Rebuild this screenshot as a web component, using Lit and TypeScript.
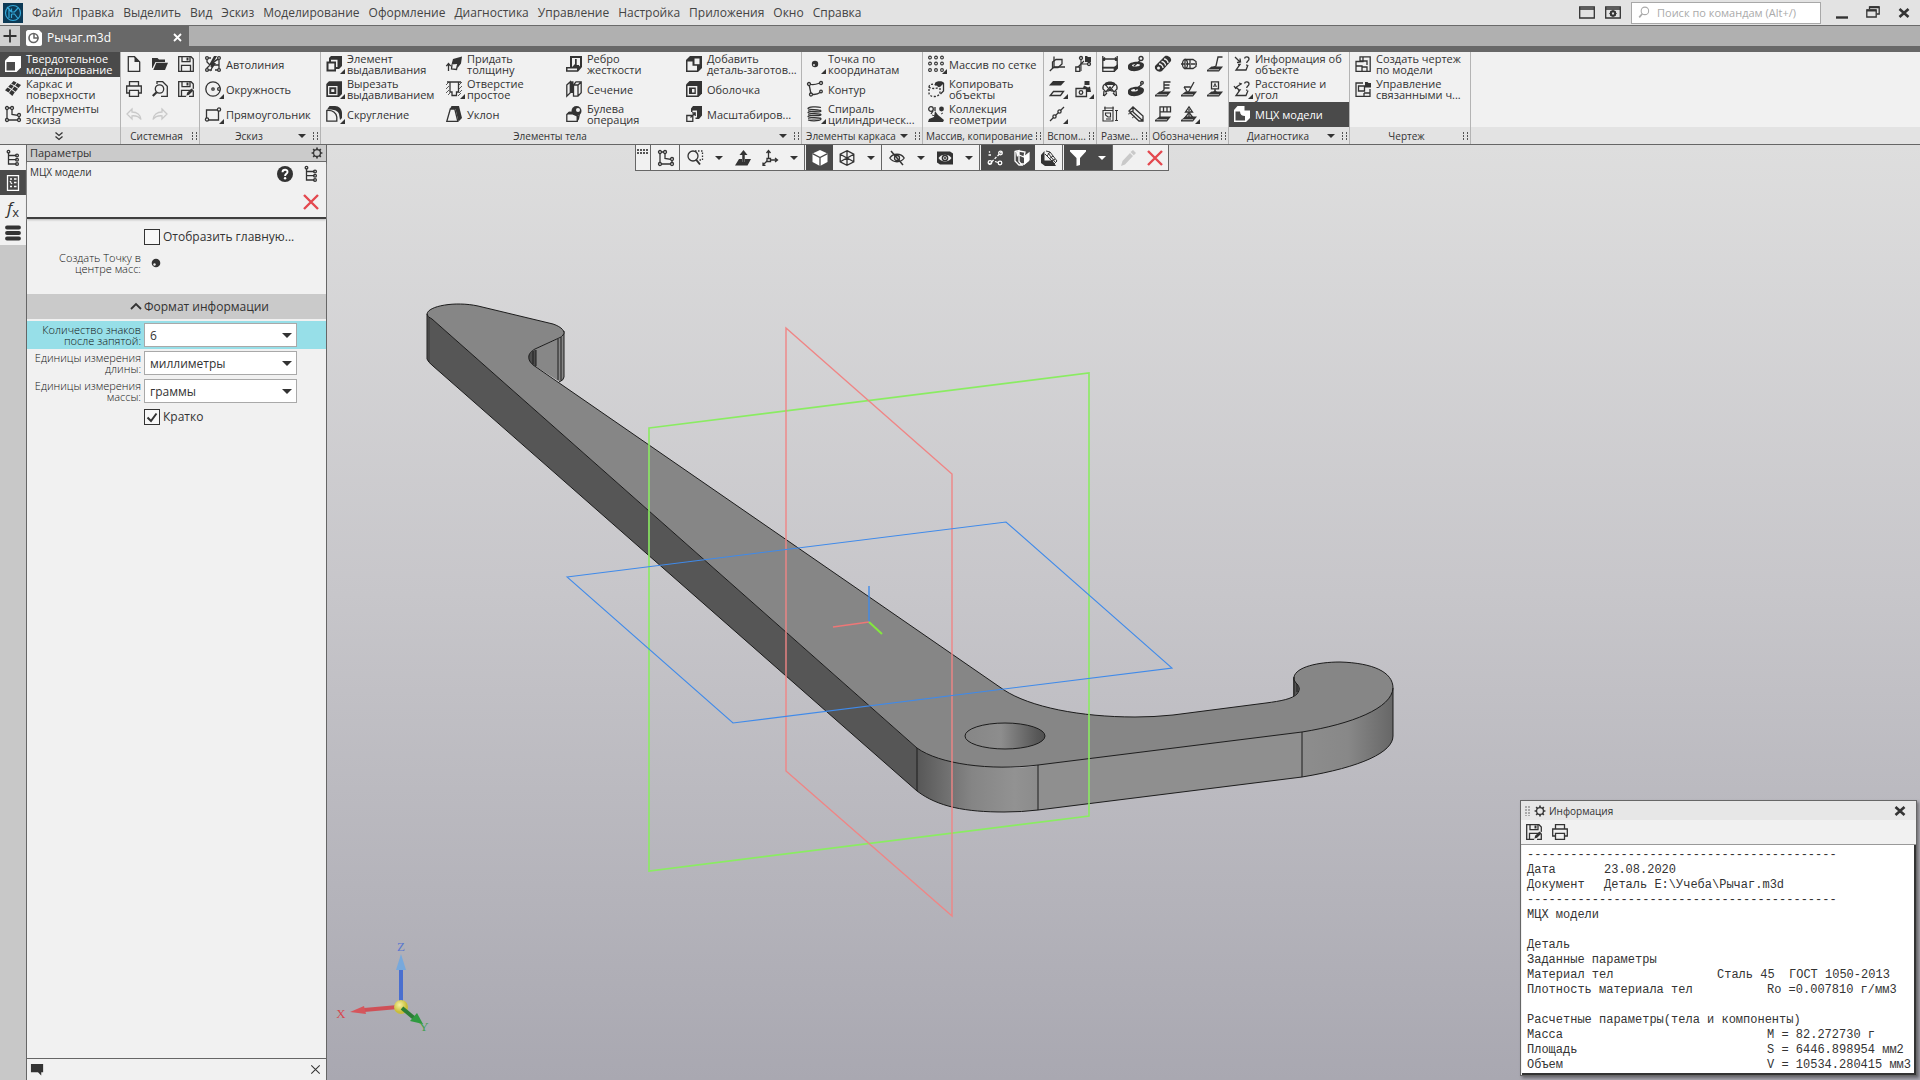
import { LitElement, html, css, svg, nothing, TemplateResult, SVGTemplateResult } from "lit";
import { customElement, property } from "lit/decorators.js";
import { classMap } from "lit/directives/class-map.js";

/* ---------- icon set: 16 x 16 grid, strokes in currentColor ---------- */

const floppy = svg`<path d="M.7.7H13l2.3 2.3v12.3H.7z"/><path d="M4 .7v5h8v-5M3.500 15V9.300h9V15"/><path class="f" d="M8.500 1.500h2v3h-2z"/>`;
const printer = svg`<path d="M3.500 5V.7h9V5M3.500 12H.7V5h14.600v7h-2.800"/><path d="M3.500 9.300h9v6h-9z"/>`;
const gear = svg`<circle cx="8" cy="8" r="4.600" stroke-width="1.700"/><path d="M8 .8v2.500M8 12.700v2.500M.8 8h2.500M12.700 8h2.500M2.900 2.900l1.800 1.800M11.300 11.300l1.800 1.800M13.100 2.900l-1.800 1.800M4.700 11.300l-1.800 1.800" stroke-width="2.200"/>`;
const tree = svg`<path d="M3.500 2.500v11.500h8M3.500 5.500h8M3.500 9.700h8"/><circle cx="3.500" cy="1.700" r="1.300"/><circle cx="12" cy="5.500" r="1.400"/><circle cx="12" cy="9.700" r="1.400"/><circle cx="12" cy="14" r="1.400"/>`;
const slab = svg`<path class="f" d="M4.500 10.500h11.500L12 15.500H0v-1.500z"/><path d="M1.500 13.700H12" stroke="var(--face, #f1f1f1)" stroke-width=".7"/>`;
const sketch = svg`<path d="M2 2h5v6.500l7 1V14H2z"/><circle class="w" cx="2" cy="2" r="1.500"/><circle class="w" cx="7" cy="2" r="1.500"/><circle class="w" cx="14" cy="9" r="1.500"/><circle class="w" cx="2" cy="14" r="1.500"/><circle class="w" cx="14" cy="14" r="1.500"/>`;

const ICONS: Record<string, SVGTemplateResult> = {
  floppy,
  printer,
  gear,
  tree,
  sketch,
  solid: svg`<path class="f" d="M4.500 0H16v11.500L11.500 16H0V4.500z"/><path class="bg" d="M1.500 6h8.500v8.500H1.500z"/>`,
  surface: svg`<path class="f" d="M8.500 0l3 1.500-2 2.700-3.300-1.500zM12.300 2L16 4l-2.500 3-3.300-2.500zM5.500 3.300l3.300 1.700-2.300 2.700-3.300-1.900zM9.500 5.500L13 7.700l-2.500 3L7.200 8.300zM2.500 6.500l3.300 2-2.300 3L0 9.300zM6.500 9l3.300 2.300L7.300 15 4 12z"/>`,
  newdoc: svg`<path d="M2.300.7h6.200l5.200 5.200v9.400H2.300z"/><path class="f" d="M8.500.7l5.200 5.200H8.500z"/>`,
  open: svg`<path class="f" d="M0 2h5.500L7 3.500h6V6H3.500L.5 12H0z"/><path class="f" d="M4.300 6.800H16L13 14H1.300z"/>`,
  saveas: svg`${floppy}<path class="bg" d="M16 7.500L9 14l-1.500 2.500H16z"/><path d="M15.300 9.500v5.800H11"/><path class="f" d="M8.500 14.500l.6-2.700L13.500 7.500l2 2-4.400 4.300z"/>`,
  preview: svg`<path d="M5 3V.7h5.700l4.600 4.600v10H9"/><circle cx="7.500" cy="8" r="4.200"/><path d="M4.600 11.200L.8 15" stroke-width="2.200"/>`,
  undo: svg`<path d="M6 3L1 8l5 5v-3.200c4-.3 7 .7 9 3.700-.5-4.500-4-7.500-9-7.500z"/>`,
  redo: svg`<path d="M10 3l5 5-5 5v-3.200c-4-.3-7 .7-9 3.700.5-4.500 4-7.500 9-7.500z"/>`,
  autoline: svg`<path d="M2 2h4M2 3v3L5 9 2 12v2h5M14 3c-4 1-6 3-8 8M14 3v11h-4M8 9h6" /><path class="f" d="M9 0L4 9h3l-2 7 6-9H8l4-7z"/><circle class="w" cx="2" cy="2" r="1.400"/><circle class="w" cx="2" cy="14" r="1.400"/><circle class="w" cx="14" cy="2" r="1.400"/><circle class="w" cx="14" cy="14" r="1.400"/>`,
  circle: svg`<circle cx="8" cy="8" r="7.200"/><circle cx="8" cy="8" r="1.200"/><circle class="w" cx="14" cy="8" r="1.400"/>`,
  rect: svg`<path d="M1.500 4h12v10h-12z"/><circle class="w" cx="14" cy="3.500" r="1.600"/><circle class="w" cx="2" cy="13.500" r="1.600"/>`,
  extrude: svg`<path class="f" d="M5 0h11v10l-3 3H10v2.500H.5V5.500H3V2z"/><path class="bg" d="M2.500 7.500h5.800v6H2.500zM5 3.800h6.500V11H10V5.500H5z"/>`,
  cut: svg`<path class="f" d="M3 .3h13V13l-3 3H.3V3z"/><path class="bg" d="M2 5h9.500v9.300H2z"/><path d="M4.300 7.300h5v4.700h-5z" stroke-width="2"/>`,
  fillet: svg`<path class="f" d="M3.500 0H9c4 0 7 3 7 7v5l-2 2-1-6C12 5 9 4 5 3.500H1z"/><path d="M.8 15.200V4.500c6-.6 9.500 2.500 10 6.500v4.200z"/>`,
  thicken: svg`<path d="M2.500 15V8M.3 10.200L2.500 7.500l2.200 2.700"/><path class="f" d="M7 3l9-2.500-1 7L11.500 12l-.5-4-5.500.5z"/><path d="M6 8.500L5.500 13l5 .500 1-4.500"/>`,
  hole: svg`<path d="M4 1v10h2v3.500h4.500V11h2V1M1 1h14"/><path d="M0 4l3-3M0 8l3-3M0 12l3-3M2 14l2-2M13 4l3-3M13 8l3-3M13 12l3-3M12 15l3-3" stroke-width=".8"/>`,
  draft: svg`<path class="f" d="M5.500 0H13l3 12-3.500 3.500L9.500 3H4z"/><path d="M4.300 3h4.500l3 12.300H.8z"/>`,
  rib: svg`<path class="f" d="M4 0h12v11l-4 4.700H0V11h4z"/><path class="bg" d="M6 2h8v7.500l-1.500 1.500H6zM1.500 12.500h9.500v1.700H1.500z"/><path class="f" d="M9 3h1.700v6H13v2H6l3-3z"/>`,
  section: svg`<path d="M.8 4L4.300.8v11L.8 15.200z"/><path class="f" d="M4 .3h3.500V12H4z"/><path d="M7.500 4L10 .8h5.200v11L12 15.200H7.500zM12 4v11M7.500 4H12l3.200-3"/>`,
  boolean: svg`<path d="M.8 8.500L3 6.300h4.200l4 4v5H.8z"/><path class="f" d="M3 5.700h5l4 4 2-1.500-1 5L11 16V8.500H1z"/><circle class="f" cx="10.500" cy="5" r="5"/><circle class="bg" cx="12" cy="4" r="2"/>`,
  addpart: svg`<path class="f" d="M4 0h12v12l-4 4H0V4z"/><path class="bg" d="M1.500 5.500h5v4.200H11v4.800H1.500z"/><path class="bg" d="M8.500 2.500h5v5.700h-5z"/>`,
  shell: svg`<path class="f" d="M3.500 0H16v12.500L12.500 16H0V3.500z"/><path class="bg" d="M1.500 5h9.800v9.500H1.500z"/><path class="f" d="M3 6.500h6.800V13H3z"/><path class="bg" d="M6 8h2.500v3.500H6z"/>`,
  scale: svg`<path class="f" d="M7 0h9v9.500L13 13H9.500v-1.500H11V4.500H6.500V6H5V2.500z"/><path d="M.8 9.500h6v5.800h-6z"/><path d="M4.500 11.500L9 7M6 6.800h3.200V10"/>`,
  point: svg`<circle class="f" cx="8" cy="8" r="3.200"/><circle class="bg" cx="7" cy="9" r=".9"/>`,
  bigpoint: svg`<circle class="f" cx="8" cy="8" r="4.300"/><circle class="bg" cx="6.500" cy="9.500" r="1.200"/>`,
  contour: svg`<path d="M2 3c5 2 8 0 12-1.500M2 3l2 10c3 1 7 0 10-2"/><circle class="w" cx="2" cy="3" r="1.500"/><circle class="w" cx="14" cy="2" r="1.500"/><circle class="w" cx="4" cy="13.500" r="1.500"/><circle class="w" cx="14" cy="10.500" r="1.300"/>`,
  helix: svg`<path d="M14 1.500C10 .3 1 .8 1 2.500s13 .5 13 2.500S1 4.500 1 6.500s13 .3 13 2.300S1 8.500 1 10.500s13 .3 13 2.300S6 15.500 1 14"/><path d="M1 4.500c4 1 10 1 13-.5M1 8.500c4 1 10 1 13-.5M1 12.500c4 1 10 1 13-.5" stroke-width=".8"/>`,
  array: svg`<g stroke-width="1.100">${[1.5, 7.5, 14].map((y) => [2, 8, 14].map((x) => svg`<circle cx=${x} cy=${y} r="1.400"/>`))}</g>`,
  copy: svg`<path d="M1 6c0-2 2-3 5-3l6 3v5c0 3-3 4.500-6 4.500S1 14 1 12z" stroke-dasharray="2 1.500"/><path d="M1 6c2 2 8 2 10 0" stroke-dasharray="2 1.500"/><path class="f" d="M7 2c1-2 8-2.500 9 0l-4 4-5-2z"/><path d="M15.500 2v8l-3 3"/>`,
  collection: svg`<circle cx="3" cy="3" r="2.300"/><path d="M5 5L3 8M7 1v4"/><circle class="f" cx="13.500" cy="3" r="2.400"/><path class="f" d="M7 5l3 4 6 5-1 2H0l1-3 5-2z"/><path d="M4 9l3 1M13 8l2-1M2 14l6-3" stroke-width=".9"/>`,
  planes: svg`<path d="M5 .5v10.500L.8 15M5 11h11"/><path d="M3.500 6L7 3.500h6V8L9 11.500H3.500z"/>`,
  lcs: svg`<path d="M6 3v12M5 8h9M2 12l7-7" stroke-width="1.100"/><circle class="w" cx="6" cy="2" r="1.500"/><circle class="w" cx="14" cy="8" r="1.500"/><path class="w" d="M.8 11h4v4.300h-4z"/><path class="f" d="M10 0h2l1 1h3v5h-6z"/>`,
  offplane: svg`<path class="f" d="M4 0h12l-4 4.500H0z"/><path d="M4.500 10.500h10L11.500 14.500H1.200z"/>`,
  camera: svg`<path d="M1 7.500h10.500v8H1z"/><circle cx="6" cy="11.500" r="1.800"/><path class="f" d="M9.500 0h5v4h-5zM9 4.500l4 2 2-1 1 5.500h-4V8L8 7z"/>`,
  ptline: svg`<path d="M1 15l14-14"/><circle class="w" cx="5.500" cy="10.500" r="1.600"/><circle class="w" cx="10.500" cy="5.500" r="1.600"/>`,
  dimlin: svg`<path d="M.800 0V12M15.200 0V10M1 3h14M3 1.500L1.200 3 3 4.500M13 1.500L14.800 3 13 4.500"/><path d="M.8 11.500h11.500v3.800H.8z"/><path class="f" d="M0 11h12l4-3v4.500L12.500 16v-3.500H0z"/>`,
  dimdia: svg`<path class="f" d="M0 10c0-5 16-6 16-1 0 7-16 8-16 3z"/><path class="bg" d="M4 9.500c0-2 8-2 8-.5s-8 2.500-8 .5z"/><path d="M6 10l9-8"/><circle class="w" cx="13" cy="2.500" r="2"/>`,
  dimang: svg`<path class="f" d="M3 2c3-2 7-2 10 0v3l-2-1H5L3 5z"/><path d="M3 3C1 4 .7 6 1 8l3 3 4-5 4 5 3-3c.3-2 0-4-2-5M4 4l2 3M12 4l-2 3"/><path class="f" d="M5 11l3-4 3 4-3-1z"/><path d="M2 10l-.5 5M14 10l.5 5M5 12l-3 3M11 12l3 3"/>`,
  dimrad: svg`<path class="f" d="M0 10c0-5 16-6 16-1 0 7-16 8-16 3z"/><path class="bg" d="M3 9.500c0-2 7-2 7-.5s-7 2.500-7 .5z"/><path d="M7 9l6-5M13 1v4"/><circle class="w" cx="14" cy="1.800" r="1.300"/>`,
  dimgroup: svg`<g stroke-width="1.100"><path d="M1 4.500h10v10.500H1zM3 .5v4M11 .5v4M2 2h10M13 4.500h3M13 14.500h3M14.500 4v11"/><path d="M3.500 7h5v4H6L3.500 9z"/><path d="M4 13h5"/></g>`,
  dimdiag: svg`<path d="M1 5l4-4 10 9v5h-4L3.500 8zM5 1v5l9.500 8.500M2 6l3-1" /><path d="M0 8l4-1M4 12l3-2" stroke-width=".8"/>`,
  thread: svg`<path class="f" d="M10 0c3-1 7 2 6 5L7 15c-3 2-8-1-7-5z"/><path d="M9 3c2 0 4 2 4 4M6.500 5.500c2 0 4 2 4 4M4 8c2 0 4 2 4 4" stroke="#f1f1f1"/><circle class="bg" cx="3.500" cy="12" r="1.500"/>`,
  axis: svg`<path d="M0 8h16" stroke-dasharray="4 1"/><path d="M4 3.500h8l3 2v5l-3 2H4z"/><ellipse cx="4" cy="8" rx="2.500" ry="4.500"/><path d="M9 4v8"/>`,
  rough: svg`${slab}<path d="M5 12l4-2 2-9h4.500"/>`,
  leader: svg`${slab}<path d="M5 12l4-3V1h6.500M9 4h5.500M9 7h5.500"/>`,
  rough2: svg`${slab}<path d="M3 6l4 6 6-11M3 6h6.500"/>`,
  datum: svg`${slab}<path d="M4.500.8h7v7h-7zM8 8v4"/><path class="f" d="M5 12h6L8 9z"/><path d="M6.500 6L8 2.500 9.500 6M7 5h2" stroke-width=".9"/>`,
  tolerance: svg`${slab}<path d="M5 .8h10.500v5H5zM8.500 1v5M12 1v5M5 6v6"/>`,
  mark: svg`${slab}<path d="M8 .8L11.500 6h-7zM8 6.500l4 5H4z"/><path d="M8 3v2M8 8v4"/>`,
  info: svg`<path d="M1 1l5 5M3 6.500L6.500 6 6 2.500M4 8.500h2L2 14h10l2-5"/><path d="M10.500 2.500C11 .3 15 .3 15 3c0 2-2.300 2-2.300 4M12.700 8.500v1.300"/>`,
  distance: svg`<path d="M1 7l6-4M5 2l3 1M0 5l2 3M4 9h2L2 14.500h10l2-5M5 9l-3-3"/><path d="M10.500 2.500C11 .3 15 .3 15 3c0 2-2.300 2-2.300 4M12.700 8.500v1.300"/>`,
  mass: svg`<path class="f" d="M3.500 0h7v4.500H16V12l-4 4H0V4z"/><path class="bg" d="M1.500 14.500V5.500H6c0 3 2 4.500 5 4.500v4.500z"/>`,
  drawing: svg`<path d="M5 5V.8h10.200V15.300H1V5.500h7V.8M5 5h7v4M1 10h6v5M7 11h5v4"/>`,
  linked: svg`<path d="M8 2H1v13.300h14V8M3.500 5h6v5h-6zM9 12h6M9 12v3"/><path class="f" d="M10 1h2.500l1 1H16v4.500h-6z"/>`,
  params: svg`<path d="M2.500.7h11v14.600h-11z"/><path d="M5 4h2M9 4h2.500M5 7.500h1.500M9 7.500h2.500M5 11.500h2M9 11.500h2.500M5 6l2 3" />`,
  zoomarea: svg`<circle cx="6" cy="6" r="5"/><path d="M8 1h7.500v9H11" stroke-dasharray="1.500 1.500"/><path d="M9 9.500l4 5" stroke-width="2"/>`,
  orient: svg`<path class="f" d="M4 9h3v3h3V9h6l-3.500 6.500H0z"/><path d="M8.500 12V4" stroke-width="2.500"/><path class="f" d="M8.500 0l4 5h-8z"/>`,
  axes: svg`<path d="M6.500 11V1M4.500 3l2-2.500 2 2.500M6 10h9M13 8l2.500 2L13 12M6 10l-5 5M1 12.500v2.800h2.500"/><path class="w" d="M5 8.500h3.500v3H5z"/>`,
  cube: svg`<path class="f" d="M8 0l7.500 3.500v8.500L8 16 .5 12V3.500z"/><path d="M.5 3.700L8 7.500l7.500-3.800M8 7.500V16" stroke="#4a4a4a"/>`,
  wire: svg`<path d="M8 .7l6.800 3.500v7.600L8 15.300 1.200 11.800V4.200zM1.200 4.200L8 8l6.800-3.800M8 8v7.300M1.200 11.800L8 8l6.800 3.800M8 .7V8"/>`,
  eyeoff: svg`<path d="M.8 8C4 3 12 3 15.200 8 12 13 4 13 .8 8z"/><circle cx="8" cy="8" r="2.500"/><path d="M2 1l12 14" stroke-width="1.500"/>`,
  eyebox: svg`<path class="f" d="M0 1.500h13l3 2v11h-13l-3-2z"/><path class="bg" d="M1.500 8C4 3.500 12 3.500 14.500 8 12 12.500 4 12.500 1.500 8z"/><circle cx="8" cy="8" r="2.600" stroke-width="1.500"/><circle class="f" cx="8" cy="8" r="1.100"/>`,
  snap: svg`<path d="M2 14.500L14.500 2M1.500 5h4M2 1.500l1 1" stroke-dasharray="2.500 1.500"/><circle cx="3" cy="12.500" r="1.800"/><circle cx="13.500" cy="3" r="1.800"/><circle cx="13" cy="13" r="1.800"/><path d="M8 11.500l3 1"/>`,
  facets: svg`<path d="M1 1.500l4-1v11l3 3.500H5l-4-4z"/><path d="M5 5l5 2 5-4v7l-5 4H7M5 1l6 1-1 5" /><path class="f" d="M10 7l5-4v8l-5 4zM2 2l3-1v4L3 7z"/>`,
  filled: svg`<path class="f" d="M0 5l3.500-4v9.500h8L15 16H4l-4-3z"/><path d="M5 1l4 1 7 9-3 3M4 4l8 8M7 3l7 9M9 2L6 6M12 6L8 9M14 9l-3 2" stroke-width="1"/>`,
  funnel: svg`<path class="f" d="M0 0h16v1.500L10 8v7l-3.500 1V8L0 1.500z"/>`,
  pen: svg`<path class="f" d="M1 16l1.500-5L10 3l3 3-8 8.500zM10.500 2l2.500-2 3 3-2.200 2.300z"/>`,
  cross: svg`<path d="M1 1l14 14M15 1L1 15" stroke-width="2.400"/>`,
  thinx: svg`<path d="M3.500 3.500l9 9M12.500 3.500l-9 9" stroke-width="1.100"/>`,
  boldx: svg`<path d="M3.500 4l9 8M12.500 4l-9 8" stroke-width="2.600"/>`,
  help: svg`<circle class="f" cx="8" cy="8" r="8"/><path d="M5.500 6.200C5.500 2.800 10.700 3 10.500 6c0 1.800-2.400 1.900-2.400 3.900" stroke="#fff" stroke-width="1.900"/><circle cx="8.100" cy="12.300" r="1.200" fill="#fff" stroke="none"/>`,
  bars: svg`<path d="M2 2.500h12M2 8h12M2 13.500h12" stroke-width="3.800" stroke-linecap="round"/>`,
  chat: svg`<path class="f" d="M1 2h13v9h-2v3.500L8.500 11H1z"/>`,
  chevrons: svg`<path d="M4.500 4.500L8 7.500l3.500-3M4.500 8.500l3.500 3 3.500-3"/>`,
  caretup: svg`<path d="M3 10L8 5l5 5" stroke-width="1.800"/>`,
  win: svg`<path d="M.7 2h14.600v11H.7zM.7 4h14.600"/>`,
  wingear: svg`<path d="M.7 2h14.600v11H.7zM.7 4h14.600"/><circle cx="8" cy="8.500" r="2.300" stroke-width="1.800"/><path d="M8 4.800v7.400M4.300 8.500h7.400M5.500 6l5 5M10.500 6l-5 5" stroke-width=".9"/><circle class="bg" cx="8" cy="8.500" r="1.100"/>`,
  search: svg`<circle cx="8.500" cy="6" r="4.600"/><path d="M5.300 9.500L1.500 14" stroke-width="2"/>`,
  min: svg`<path d="M2 12.500h12" stroke-width="2.400"/>`,
  restore: svg`<path d="M1.800 5h9.400v7H1.800z"/><path d="M4.500 4V1.800h9.700V9h-2.500" /><path d="M1.800 5.500h9.400M4.500 2.200h9.700" stroke-width="2"/>`,
  part: svg`<path class="f" d="M2 0h11l3 3v11c0 1-1 2-2 2H2c-1 0-2-1-2-2V2c0-1 1-2 2-2z"/><circle cx="7.500" cy="8" r="4.500" stroke="#666" stroke-width="1.600"/><path d="M8 3.500V8h4.500" stroke="#666" stroke-width="1.500"/>`,
};

const iconCss = css`
  .icon {
    flex: none;
    display: block;
    width: 16px;
    height: 16px;
    overflow: visible;
    fill: none;
    stroke: currentColor;
    stroke-width: 1.3;
  }
  .icon .f {
    fill: currentColor;
    stroke: none;
  }
  .icon .w {
    fill: var(--face, #f1f1f1);
  }
  .icon .bg {
    fill: var(--face, #f1f1f1);
    stroke: none;
  }
  button {
    font: inherit;
    color: inherit;
    background: none;
    border: 0;
    margin: 0;
    padding: 0;
  }
  .arrow {
    flex: none;
    display: block;
    width: 8px;
    height: 4px;
    fill: currentColor;
  }
`;

const icon = (name: string, flyout = false) => html`<svg class="icon" viewBox="0 0 16 16" aria-hidden="true">
  ${ICONS[name]}${flyout ? svg`<path class="f" d="M19 13v5h-5z"/>` : nothing}
</svg>`;

const arrow = html`<svg class="arrow" viewBox="0 0 8 4" aria-hidden="true"><path d="M0 0h8L4 4z"/></svg>`;

/* ---------- ribbon ---------- */

interface Command {
  icon: string;
  label: string;
  flyout?: boolean;
  iconOnly?: boolean;
  active?: boolean;
  disabled?: boolean;
}
interface Group {
  title: string;
  narrow?: boolean;
  menu?: boolean;
  commands: Command[];
}

const c = (icon: string, label: string, flyout = false): Command => ({ icon, label, flyout });
const s = (icon: string, label: string, flyout = false, disabled = false): Command => ({
  icon, label, flyout, disabled, iconOnly: true,
});

const GROUPS: Group[] = [
  {
    title: "Системная", narrow: true,
    commands: [
      s("newdoc", "Создать"), s("printer", "Печать"), s("undo", "Отменить", false, true),
      s("open", "Открыть"), s("preview", "Предварительный просмотр"), s("redo", "Повторить", false, true),
      s("floppy", "Сохранить"), s("saveas", "Сохранить как"),
    ],
  },
  {
    title: "Эскиз", menu: true,
    commands: [c("autoline", "Автолиния"), c("circle", "Окружность", true), c("rect", "Прямоугольник", true)],
  },
  {
    title: "Элементы тела", menu: true,
    commands: [
      c("extrude", "Элемент\nвыдавливания", true), c("cut", "Вырезать\nвыдавливанием", true), c("fillet", "Скругление", true),
      c("thicken", "Придать\nтолщину"), c("hole", "Отверстие\nпростое", true), c("draft", "Уклон"),
      c("rib", "Ребро\nжесткости"), c("section", "Сечение"), c("boolean", "Булева\nоперация"),
      c("addpart", "Добавить\nдеталь-заготов..."), c("shell", "Оболочка"), c("scale", "Масштабиров..."),
    ],
  },
  {
    title: "Элементы каркаса", menu: true,
    commands: [c("point", "Точка по\nкоординатам", true), c("contour", "Контур"), c("helix", "Спираль\nцилиндрическ...", true)],
  },
  {
    title: "Массив, копирование",
    commands: [c("array", "Массив по сетке", true), c("copy", "Копировать\nобъекты"), c("collection", "Коллекция\nгеометрии")],
  },
  {
    title: "Вспом...", narrow: true,
    commands: [
      s("planes", "Плоскость"), s("offplane", "Смещенная плоскость", true), s("ptline", "Точка на линии", true),
      s("lcs", "Система координат"), s("camera", "Контрольная точка", true),
    ],
  },
  {
    title: "Разме...", narrow: true,
    commands: [
      s("dimlin", "Линейный размер"), s("dimang", "Угловой размер"), s("dimgroup", "Размеры эскиза"),
      s("dimdia", "Диаметральный размер"), s("dimrad", "Радиальный размер"), s("dimdiag", "Размер по граням"),
    ],
  },
  {
    title: "Обозначения", narrow: true,
    commands: [
      s("thread", "Условная резьба"), s("leader", "Линия-выноска"), s("tolerance", "Допуск формы"),
      s("axis", "Осевая"), s("rough2", "Шероховатость"), s("mark", "Маркировка", true),
      s("rough", "Позиция"), s("datum", "База"),
    ],
  },
  {
    title: "Диагностика", menu: true,
    commands: [
      c("info", "Информация об\nобъекте"), c("distance", "Расстояние и\nугол", true),
      { icon: "mass", label: "МЦХ модели", active: true },
    ],
  },
  {
    title: "Чертеж",
    commands: [c("drawing", "Создать чертеж\nпо модели"), c("linked", "Управление\nсвязанными ч...")],
  },
];

const MODES: Command[] = [
  { icon: "solid", label: "Твердотельное\nмоделирование", active: true },
  { icon: "surface", label: "Каркас и\nповерхности" },
  { icon: "sketch", label: "Инструменты\nэскиза" },
];

@customElement("cad-ribbon")
export class CadRibbon extends LitElement {
  static styles = [
    iconCss,
    css`
      :host {
        display: flex;
        background: linear-gradient(#f1f1f1 75px, #e3e3e3 75px);
        border-bottom: 1px solid #666;
        color: #333;
        font-size: 11px;
      }
      .group {
        display: flex;
        flex-direction: column;
        border-right: 1px solid #b4b4b4;
      }
      .commands {
        display: grid;
        grid-auto-flow: column;
        grid-template-rows: repeat(3, 25px);
        grid-auto-columns: 120px;
      }
      .narrow .commands {
        grid-auto-columns: 26px;
      }
      .command {
        display: flex;
        align-items: center;
        gap: 5px;
        padding: 0 0 1px 5px;
        text-align: left;
        line-height: 11px;
        white-space: pre;
      }
      .active {
        background: #4a4a4a;
        color: #fff;
        --face: #4a4a4a;
      }
      .command:disabled {
        color: #c9c9c9;
      }
      .foot {
        display: flex;
        align-items: center;
        height: 17px;
        padding-right: 2px;
        font-size: 10px;
      }
      .title {
        flex: 1;
        text-align: center;
        white-space: nowrap;
      }
      .foot .arrow {
        margin-right: 7px;
      }
      .grip {
        flex: none;
        width: 5px;
        height: 10px;
        background: repeating-linear-gradient(#e3e3e3 0 1px, transparent 1px 3px),
          linear-gradient(90deg, #555 1px, transparent 1px 4px, #555 4px);
      }
      .more {
        display: grid;
        place-items: center;
        width: 100%;
      }
    `,
  ];

  private command(cmd: Command): TemplateResult {
    return html`<button
      class=${classMap({ command: true, active: !!cmd.active })}
      ?disabled=${cmd.disabled}
      aria-label=${cmd.iconOnly ? cmd.label : nothing}
    >${icon(cmd.icon, cmd.flyout)}${cmd.iconOnly ? nothing : html`<span>${cmd.label}</span>`}</button>`;
  }

  render() {
    return html`
      <div class="group">
        <div class="commands">${MODES.map((m) => this.command(m))}</div>
        <div class="foot"><button class="more" aria-label="Развернуть">${icon("chevrons")}</button></div>
      </div>
      ${GROUPS.map(
        (g) => html`<div class=${classMap({ group: true, narrow: !!g.narrow })}>
          <div class="commands">${g.commands.map((cmd) => this.command(cmd))}</div>
          <div class="foot">
            <span class="title">${g.title}</span>
            ${g.menu ? arrow : nothing}
            <span class="grip"></span>
          </div>
        </div>`
      )}
    `;
  }
}

/* ---------- parameters panel ---------- */

@customElement("cad-params")
export class CadParams extends LitElement {
  static styles = [
    iconCss,
    css`
      :host {
        display: flex;
        flex-direction: column;
        background: #f1f1f1;
        border-left: 1px solid #666;
        border-right: 1px solid #666;
        color: #333;
      }
      .head {
        display: flex;
        align-items: center;
        justify-content: space-between;
        height: 16px;
        padding: 0 3px;
        background: #cbcbcb;
        border-bottom: 1px solid #666;
        font-size: 11px;
        --face: #cbcbcb;
      }
      .head .icon {
        width: 12px;
        height: 12px;
      }
      .title {
        display: grid;
        grid-template-columns: 1fr 16px 16px;
        grid-template-rows: 16px 16px;
        column-gap: 10px;
        row-gap: 12px;
        height: 57px;
        box-sizing: border-box;
        padding: 4px 7px 0 3px;
        border-bottom: 2px solid #3f3f3f;
        box-shadow: 0 1px 2px #bbb;
        font-size: 10px;
      }
      .name {
        line-height: 12px;
      }
      .cancel {
        grid-column: 3;
        color: #e4484f;
      }
      .form {
        flex: 1;
        display: flex;
        flex-direction: column;
        padding-top: 6px;
      }
      .row {
        display: grid;
        grid-template-columns: 114px 153px 1fr;
        column-gap: 3px;
        align-items: center;
        min-height: 24px;
      }
      .field {
        min-height: 28px;
      }
      .caption {
        text-align: right;
        font-size: 11px;
        line-height: 11px;
        white-space: pre;
        font-weight: 300;
        color: #111;
        justify-self: end;
      }
      .hot {
        background: #97dfe8;
      }
      .section {
        display: flex;
        align-items: center;
        height: 25px;
        margin: 17px 0 2px;
        padding-left: 101px;
        background: #cacaca;
      }
      .check {
        grid-column: 2;
        display: flex;
        align-items: center;
        gap: 3px;
        white-space: nowrap;
      }
      .box {
        display: grid;
        width: 16px;
        height: 16px;
      }
      .box > * {
        grid-area: 1 / 1;
      }
      .box input {
        appearance: none;
        box-sizing: border-box;
        width: 16px;
        height: 16px;
        margin: 0;
        background: #f8f8f8;
        border: 1px solid #333;
      }
      .box .icon {
        visibility: hidden;
        pointer-events: none;
        z-index: 1;
      }
      .box input:checked + .icon {
        visibility: visible;
      }
      .dot {
        width: 24px;
        height: 24px;
        display: grid;
        place-items: center;
      }
      .pick {
        display: grid;
        align-items: center;
      }
      .pick > * {
        grid-area: 1 / 1;
      }
      .pick select {
        appearance: none;
        height: 24px;
        width: 100%;
        padding: 2px 5px 0;
        border: 1px solid #a9a9a9;
        border-radius: 0;
        background: #fff;
        color: #333;
        font: inherit;
      }
      .pick .arrow {
        justify-self: end;
        width: 10px;
        height: 5px;
        margin-right: 5px;
        pointer-events: none;
      }
      .foot {
        display: flex;
        align-items: center;
        justify-content: space-between;
        height: 21px;
        padding: 0 3px;
        border-top: 1px solid #666;
      }
      .foot .icon {
        width: 15px;
        height: 15px;
      }
    `,
  ];

  private pick(id: string, caption: string, value: string, hot = false) {
    return html`<div class=${classMap({ row: true, field: true, hot })}>
      <label class="caption" for=${id}>${caption}</label>
      <span class="pick"><select id=${id}><option selected>${value}</option></select>${arrow}</span>
    </div>`;
  }

  private check(label: string, checked: boolean) {
    return html`<div class="row">
      <label class="check">
        <span class="box"
          ><input type="checkbox" ?checked=${checked} /><svg class="icon" viewBox="0 0 16 16"><path d="M3.500 8.500L7 12l5.500-7.500" stroke-width="2"/></svg></span
        >${label}</label
      >
    </div>`;
  }

  render() {
    return html`
      <div class="head"><span>Параметры</span><button aria-label="Настройка панели">${icon("gear")}</button></div>
      <div class="title">
        <span class="name">МЦХ модели</span>
        <button aria-label="Помощь">${icon("help")}</button>
        <button aria-label="Дерево">${icon("tree")}</button>
        <button class="cancel" aria-label="Завершить">${icon("cross")}</button>
      </div>
      <div class="form">
        ${this.check("Отобразить главную...", false)}
        <div class="row field">
          <span class="caption">${"Создать Точку в\nцентре масс:"}</span>
          <button class="dot" aria-label="Создать точку">${icon("bigpoint")}</button>
        </div>
        <button class="section" aria-expanded="true">${icon("caretup")}<span>Формат информации</span></button>
        ${this.pick("digits", "Количество знаков\nпосле запятой:", "6", true)}
        ${this.pick("length", "Единицы измерения\nдлины:", "миллиметры")}
        ${this.pick("mass", "Единицы измерения\nмассы:", "граммы")}
        ${this.check("Кратко", true)}
      </div>
      <div class="foot">
        <button aria-label="Сообщения">${icon("chat")}</button>
        <button aria-label="Закрыть">${icon("thinx")}</button>
      </div>
    `;
  }
}

/* ---------- 3D view ---------- */

interface Tool {
  icon?: string;
  label: string;
  on?: boolean;
  tone?: string;
}
const DROP: Tool = { label: "Список" };
const TOOLS: Tool[][] = [
  [{ icon: "sketch", label: "Эскиз" }],
  [{ icon: "zoomarea", label: "Масштаб" }, DROP, { icon: "orient", label: "Нормально к" }, { icon: "axes", label: "Ориентация" }, DROP],
  [{ icon: "cube", label: "Полутоновое", on: true }, { icon: "wire", label: "Каркас" }, DROP],
  [{ icon: "eyeoff", label: "Скрыть" }, DROP, { icon: "eyebox", label: "Показать" }, DROP],
  [{ icon: "snap", label: "Привязки", on: true }, { icon: "facets", label: "Грани", on: true }, { icon: "filled", label: "Разнесение" }],
  [{ icon: "funnel", label: "Фильтр", on: true }, { ...DROP, on: true }],
  [{ icon: "pen", label: "Цвет", tone: "faint" }, { icon: "cross", label: "Отмена", tone: "red" }],
];

@customElement("cad-view")
export class CadView extends LitElement {
  static styles = [
    iconCss,
    css`
      :host {
        display: block;
        position: relative;
        overflow: hidden;
        background: linear-gradient(#dedede, #c7c6ca 48%, #a9a8b1);
        color: #333;
      }
      .scene {
        position: absolute;
        inset: 0;
        width: 100%;
        height: 100%;
      }
      .edge {
        fill: none;
        stroke: #1c1c1c;
        stroke-width: 1;
      }
      .plane {
        fill: none;
      }
      .axis-name {
        font: 13px "Liberation Serif", serif;
        text-anchor: middle;
      }
      .tools {
        position: absolute;
        top: 0;
        left: 308px;
        display: flex;
        height: 25px;
        background: #f1f1f1;
        border: 1px solid #666;
        border-top: 0;
      }
      .set {
        display: flex;
        padding-left: 1px;
        border-left: 1px solid #666;
      }
      .tool {
        display: grid;
        place-items: center;
        width: 27px;
      }
      .drop {
        width: 21px;
      }
      .on {
        background: #4a4a4a;
        color: #fff;
        --face: #4a4a4a;
      }
      .faint {
        color: #c9c9c9;
      }
      .red {
        color: #e4484f;
      }
      .grip {
        width: 11px;
        height: 5px;
        margin: 4px 2px 0 1px;
        background: repeating-linear-gradient(transparent 0 2px, #f1f1f1 2px 3px),
          repeating-linear-gradient(90deg, #555 0 2px, transparent 2px 3px);
      }
    `,
  ];

  render() {
    return html`
      <svg class="scene" viewBox="327 145 1593 935" preserveAspectRatio="xMinYMin slice" role="img" aria-label="Рычаг">
        <defs>
          <linearGradient id="round" x1="917" x2="1039" y1="0" y2="0" gradientUnits="userSpaceOnUse">
            <stop offset="0" stop-color="#575757"/><stop offset=".45" stop-color="#858585"/><stop offset=".8" stop-color="#929292"/><stop offset="1" stop-color="#8b8b8b"/>
          </linearGradient>
          <linearGradient id="tip" x1="1302" x2="1394" y1="0" y2="0" gradientUnits="userSpaceOnUse">
            <stop offset="0" stop-color="#8d8d8d"/><stop offset=".5" stop-color="#888"/><stop offset="1" stop-color="#666"/>
          </linearGradient>
          <linearGradient id="bore"><stop offset="0" stop-color="#868686"/><stop offset=".45" stop-color="#8d8d8d"/><stop offset=".9" stop-color="#585858"/><stop offset="1" stop-color="#505050"/></linearGradient>
          <radialGradient id="ball" cx=".4" cy=".35"><stop offset="0" stop-color="#f6f2a0"/><stop offset="1" stop-color="#c9bd3a"/></radialGradient>
        </defs>

        <!-- side walls -->
        <path fill="#878787" d="M564 333L562 337 535 349 Q524 358 535 366L560 382Q564 380 564 377Z"/>
        <path fill="#4c4c4c" d="M534 350Q528 353 528 359Q530 364 536 367V350Z"/>
        <path class="edge" d="M564 331V377Q564 380 559 382M561 337V380M558 339V380M533 351V364M536 350V366" />
        <path fill="#565656" d="M427 314V359Q428 362 433 366L917 791V748L430 317Z"/>
        <path fill="url(#round)" d="M917 748V791C938 807 966 812 1004 812Q1022 812 1039 810V765Q1000 775 917 748Z"/>
        <path fill="#8f8f8f" d="M1038 765V810L1302 777V732Z"/>
        <path fill="url(#tip)" d="M1302 732V777C1362 767 1393 752 1393 736V688Z"/>
        <path fill="#555" d="M1293 677V697L1301 690V684Z"/>

        <!-- top face -->
        <path fill="#868686" stroke="#1c1c1c" d="M427 314C428 306 455 301 478 306L553 324C562 327 566 332 563 335Q562 337 559 338L535 349C527 353 526 361 536 367L1004 690C1030 707 1080 717 1135 717Q1154 717 1173 715L1266 703C1281 701 1292 699 1297 694C1301 689 1299 686 1296 683Q1293 680 1294 677C1296 667 1318 662 1340 662C1373 663 1393 672 1393 688C1392 708 1352 724 1302 732L1038 765C990 771 939 764 917 748L432 319Q427 317 427 314Z"/>
        <ellipse cx="1005" cy="736" rx="40" ry="13" fill="url(#bore)" stroke="#1c1c1c"/>
        <path class="edge" d="M427 314V359Q428 362 433 366L917 791C938 807 966 812 1004 812Q1022 812 1038 810L1302 777C1362 767 1393 752 1393 736V688M917 748V791M1038 765V810M1302 732V777M1294 677V696M1297 684V692"/>
        <path class="edge" opacity=".5" d="M429 318V362"/>

        <!-- reference planes and origin -->
        <path class="plane" stroke="#8aec62" stroke-width="1.6" d="M649 428L1089 373V816L649 871Z"/>
        <path class="plane" stroke="#f08585" stroke-width="1.4" d="M786 328L952 474V916L786 771Z"/>
        <path class="plane" stroke="#3f8aea" stroke-width="1.1" d="M567 577L1006 522L1172 668L733 723Z"/>
        <path class="plane" stroke="#3f8aea" stroke-width="1.4" d="M869 586V622"/>
        <path class="plane" stroke="#ee7777" stroke-width="1.6" d="M833 627L869 622"/>
        <path class="plane" stroke="#84e83e" stroke-width="2" d="M869 622L882 634"/>

        <!-- axis triad -->
        <path stroke="#4a6fcf" stroke-width="4" d="M401 1003V969"/>
        <path fill="#78a9dc" d="M401 954L406 970H396Z"/>
        <path stroke="#cf5057" stroke-width="4" d="M398 1007L364 1010"/>
        <path fill="#d5565c" d="M350 1012L364 1006L366 1014Z"/>
        <circle cx="401" cy="1007" r="7" fill="url(#ball)"/>
        <path stroke="#2c7d36" stroke-width="4" d="M402 1008L414 1018"/>
        <path fill="#2f9a40" d="M423 1024L410 1021L417 1013Z"/>
        <text class="axis-name" x="401" y="951" fill="#5b78cf">Z</text>
        <text class="axis-name" x="341" y="1018" fill="#d8484f">X</text>
        <text class="axis-name" x="424" y="1031" fill="#3f9f4c">Y</text>
      </svg>

      <div class="tools" role="toolbar">
        <span class="grip"></span>
        ${TOOLS.map(
          (set) => html`<div class="set">
            ${set.map(
              (t) => html`<button
                class=${classMap({ tool: true, drop: !t.icon, on: !!t.on, faint: t.tone === "faint", red: t.tone === "red" })}
                aria-label=${t.label}
              >${t.icon ? icon(t.icon) : arrow}</button>`
            )}
          </div>`
        )}
      </div>
    `;
  }
}

/* ---------- information window ---------- */

const RULE = "-".repeat(43);
const REPORT: [string, string?, string?][] = [
  [RULE],
  ["Дата", "23.08.2020", "near"],
  ["Документ", "Деталь E:\\Учеба\\Рычаг.m3d", "near"],
  [RULE],
  ["МЦХ модели"],
  [""],
  ["Деталь"],
  ["Заданные параметры"],
  ["Материал тел", "Сталь 45  ГОСТ 1050-2013", "mid"],
  ["Плотность материала тел", "Ro =0.007810 г/мм3", "far"],
  [""],
  ["Расчетные параметры(тела и компоненты)"],
  ["Масса", "M = 82.272730 г", "far"],
  ["Площадь", "S = 6446.898954 мм2", "far"],
  ["Объем", "V = 10534.280415 мм3", "far"],
];

@customElement("cad-info")
export class CadInfo extends LitElement {
  static styles = [
    iconCss,
    css`
      :host {
        display: block;
        background: #f1f1f1;
        border: 1px solid #666;
        box-shadow: 2px 2px 3px #0006;
        color: #333;
      }
      .head {
        display: flex;
        align-items: center;
        height: 19px;
        padding: 0 8px 0 4px;
        background: #e7e7e7;
        font-size: 10px;
        --face: #e7e7e7;
      }
      .head .icon {
        width: 12px;
        height: 12px;
      }
      .head .close .icon {
        width: 16px;
        height: 16px;
      }
      .grip {
        width: 5px;
        height: 11px;
        margin-right: 4px;
        background: repeating-linear-gradient(#e7e7e7 0 1px, transparent 1px 3px),
          linear-gradient(90deg, #aaa 2px, transparent 2px 3px, #aaa 3px);
      }
      .name {
        flex: 1;
        padding-left: 3px;
      }
      .bar {
        display: flex;
        align-items: center;
        gap: 10px;
        height: 24px;
        padding-left: 5px;
        border-bottom: 1px solid #999;
      }
      .report {
        margin-left: 1px;
        padding: 3px 0 0 5px;
        background: #fff;
        border-right: 2px solid #333;
        border-bottom: 2px solid #333;
        overflow: hidden;
        font: 12px/15px "Liberation Mono", monospace;
      }
      .line {
        display: flex;
        height: 15px;
        white-space: pre;
      }
      .near,
      .mid,
      .far {
        display: grid;
      }
      .near {
        grid-template-columns: 77px auto;
      }
      .mid {
        grid-template-columns: 190px auto;
      }
      .far {
        grid-template-columns: 240px auto;
      }
    `,
  ];

  render() {
    return html`
      <div class="head">
        <span class="grip"></span>${icon("gear")}<span class="name">Информация</span>
        <button class="close" aria-label="Закрыть">${icon("boldx")}</button>
      </div>
      <div class="bar">
        <button aria-label="Сохранить">${icon("saveas")}</button>
        <button aria-label="Печать">${icon("printer")}</button>
      </div>
      <div class="report">
        ${REPORT.map(
          ([text, value, col]) =>
            html`<div class="line ${col ?? ""}"><span>${text}</span>${value ? html`<span>${value}</span>` : nothing}</div>`
        )}
      </div>
    `;
  }
}

/* ---------- application shell ---------- */

const MENU = [
  "Файл", "Правка", "Выделить", "Вид", "Эскиз", "Моделирование", "Оформление", "Диагностика",
  "Управление", "Настройка", "Приложения", "Окно", "Справка",
];

@customElement("app-root")
export class AppRoot extends LitElement {
  @property() document = "Рычаг.m3d";

  static styles = [
    iconCss,
    css`
      :host {
        display: flex;
        flex-direction: column;
        height: 100vh;
        overflow: hidden;
        background: #c8c8c8;
        color: #444;
        font: 12px/16px "Open Sans", "Noto Sans", sans-serif;
      }
      .menubar {
        display: flex;
        align-items: center;
        height: 25px;
        padding: 0 8px 0 3px;
        background: #e3e3e3;
        border-bottom: 1px solid #6a6a6a;
        --face: #e3e3e3;
      }
      .logo {
        width: 20px;
        height: 20px;
        margin-right: 9px;
      }
      .menus {
        flex: 1;
        display: flex;
        gap: 9px;
      }
      .window {
        display: flex;
        align-items: center;
        gap: 10px;
        color: #333;
      }
      .search {
        display: flex;
        align-items: center;
        gap: 6px;
        height: 20px;
        width: 182px;
        padding-left: 6px;
        background: #fff;
        border: 1px solid #a8a8a8;
        color: #aaa;
        font-size: 11px;
      }
      .search .icon {
        width: 13px;
        height: 13px;
      }
      .search input {
        flex: 1;
        min-width: 0;
        padding: 0;
        border: 0;
        outline: 0;
        background: none;
        font: inherit;
      }
      .search input::placeholder {
        color: #aaa;
      }
      .controls {
        display: flex;
        gap: 15px;
        padding-left: 3px;
      }
      .tabs {
        display: flex;
        height: 20px;
        background: #b0b0b0;
        border-bottom: 6px solid #686868;
      }
      .add {
        display: grid;
        place-items: center;
        width: 20px;
        background: #d0d0d0;
        color: #333;
      }
      .tab {
        display: flex;
        align-items: center;
        gap: 5px;
        box-sizing: border-box;
        width: 169px;
        padding: 3px 3px 0 6px;
        background: #686868;
        color: #fff;
        --face: #fff;
      }
      .tab span {
        flex: 1;
      }
      .work {
        flex: 1;
        display: grid;
        grid-template-columns: 26px 301px minmax(0, 1fr);
        min-height: 0;
      }
      .rail {
        display: flex;
        flex-direction: column;
        color: #333;
      }
      .side {
        display: grid;
        place-items: center;
        height: 25px;
        background: #f1f1f1;
      }
      .side.on {
        background: #4a4a4a;
        color: #fff;
      }
      .fx {
        font: italic 17px/20px "Open Sans", sans-serif;
      }
      .fx sub {
        font: 13px/10px "Open Sans", sans-serif;
        vertical-align: -3px;
      }
      .stage {
        position: relative;
        display: grid;
      }
      cad-info {
        position: absolute;
        right: 3px;
        bottom: 4px;
        width: 395px;
      }
    `,
  ];

  render() {
    return html`
      <header class="menubar">
        <svg class="logo" viewBox="0 0 20 20" aria-hidden="true">
          <rect width="20" height="20" fill="#0d3a56"/>
          <g fill="none" stroke="#35a8d8" stroke-width="1.200">
            <circle cx="10" cy="10" r="7.500"/><path d="M6 5v10M8.500 5.500v3.500h3L15 5M8.500 11v4M8.500 11h3l3.500 4.500M8.500 9L4 4"/>
          </g>
        </svg>
        <nav class="menus">${MENU.map((m) => html`<button>${m}</button>`)}</nav>
        <div class="window">
          <button aria-label="Окно">${icon("win")}</button>
          <button aria-label="Настройка интерфейса">${icon("wingear")}</button>
          <label class="search">${icon("search")}<input type="search" aria-label="Поиск по командам" placeholder="Поиск по командам (Alt+/)" /></label>
          <div class="controls">
            <button aria-label="Свернуть">${icon("min")}</button>
            <button aria-label="Восстановить">${icon("restore")}</button>
            <button aria-label="Закрыть">${icon("boldx")}</button>
          </div>
        </div>
      </header>
      <div class="tabs">
        <button class="add" aria-label="Новая вкладка"><svg class="icon" viewBox="0 0 16 16"><path d="M8 1.500v13M1.500 8h13" stroke-width="1.800"/></svg></button>
        <div class="tab">
          ${icon("part")}<span>${this.document}</span>
          <button aria-label="Закрыть вкладку"><svg class="icon" viewBox="0 0 16 16"><path d="M4 4l7 7M11 4l-7 7" stroke-width="1.800"/></svg></button>
        </div>
      </div>
      <cad-ribbon></cad-ribbon>
      <main class="work">
        <nav class="rail">
          <button class="side" aria-label="Дерево">${icon("tree")}</button>
          <button class="side on" aria-label="Параметры">${icon("params")}</button>
          <button class="side" aria-label="Переменные"><span class="fx">f<sub>x</sub></span></button>
          <button class="side" aria-label="Слои">${icon("bars")}</button>
        </nav>
        <cad-params></cad-params>
        <div class="stage">
          <cad-view></cad-view>
          <cad-info></cad-info>
        </div>
      </main>
    `;
  }
}
